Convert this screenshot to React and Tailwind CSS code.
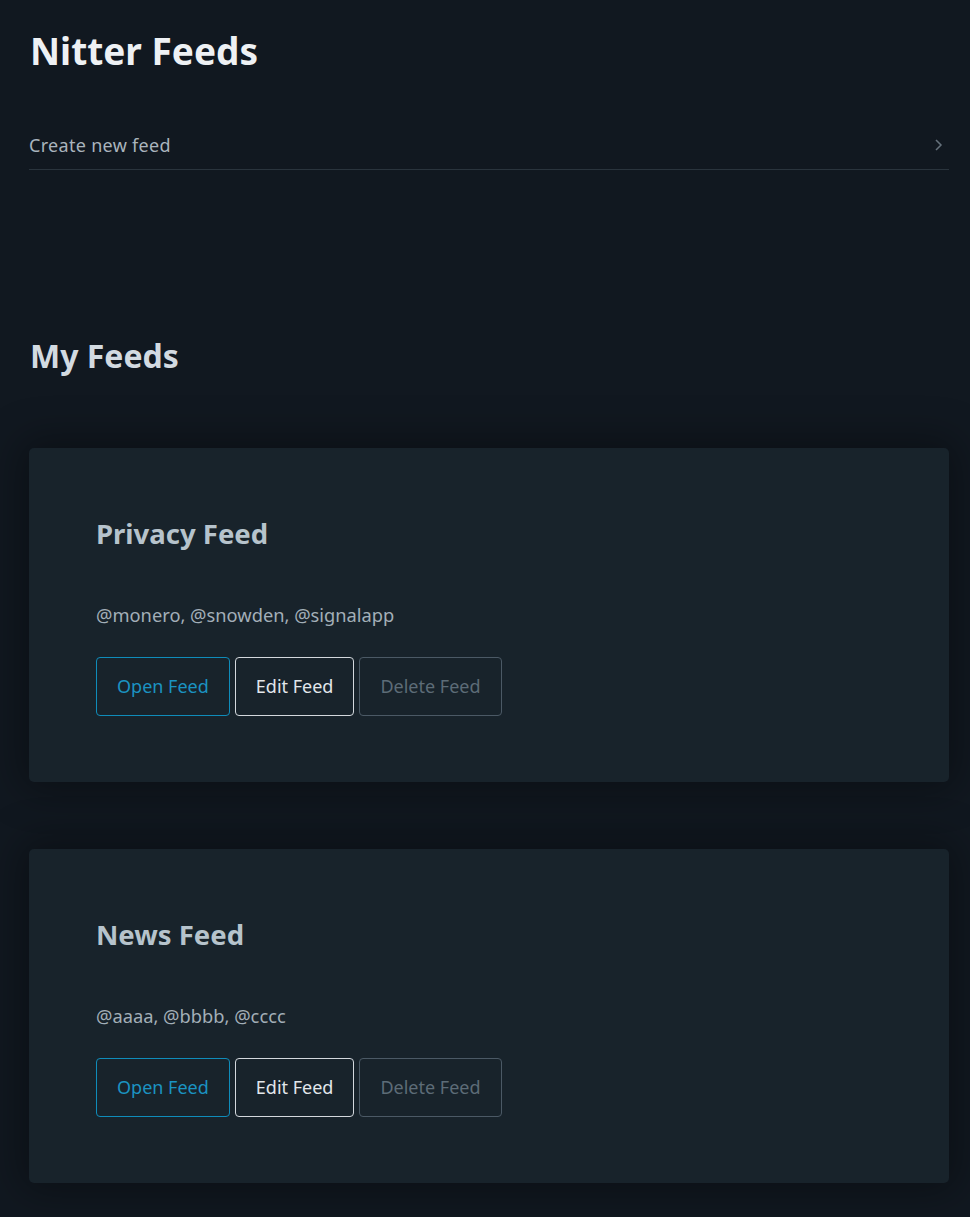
import React from "react";

const FEEDS = [
  { name: "Privacy Feed", handles: ["@monero", "@snowden", "@signalapp"] },
  { name: "News Feed", handles: ["@aaaa", "@bbbb", "@cccc"] },
];

function FeedCard({ feed }) {
  return (
    <section className="rounded-[5px] bg-[#18232b] px-[67px] pt-[64px] pb-[66px] shadow-[0_0_40px_8px_rgba(0,0,0,0.35)]">
      <h3 className="text-[27.5px] leading-[44px] font-bold text-[#b6c3cc]">{feed.name}</h3>
      <p className="mt-[46px] text-[18.3px] leading-[26px] text-[#a3afb8]">{feed.handles.join(", ")}</p>
      <div className="mt-[29px] flex gap-[5px]">
        <button
          type="button"
          className="h-[59px] rounded-[4px] border border-[#0f8cba] px-[20px] text-[18px] text-[#1b93c2]"
        >
          Open Feed
        </button>
        <button
          type="button"
          className="h-[59px] rounded-[4px] border border-[#d3d8dd] px-[20px] text-[18px] text-[#e2e7eb]"
        >
          Edit Feed
        </button>
        <button
          type="button"
          className="h-[59px] rounded-[4px] border border-[#4b5965] px-[20px] text-[18px] text-[#5d6c77]"
        >
          Delete Feed
        </button>
      </div>
    </section>
  );
}

export default function App() {
  return (
    <div className="min-h-[1217px] bg-[#111820] pl-[29px] pr-[21px] pt-[24px] pb-[35px] font-['Noto_Sans',sans-serif]">
      <h1 className="pl-px text-[37px] leading-[54px] font-bold text-[#eef1f4]">Nitter Feeds</h1>

      <a
        href="#"
        className="mt-[45px] flex h-[47px] items-center justify-between border-b border-[#2a343d] pb-[2px] text-[18px] tracking-[0.3px] text-[#aab4bd]"
      >
        <span>Create new feed</span>
        <svg width="10" height="14" viewBox="0 0 10 14" className="mr-[6px] text-[#65717b]">
          <path d="M3 2 L8 7 L3 12" fill="none" stroke="currentColor" strokeWidth="1.5" />
        </svg>
      </a>

      <h2 className="mt-[164px] pl-px text-[32px] leading-[44px] font-bold text-[#d3dae1]">My Feeds</h2>

      <div className="mt-[70px] flex flex-col gap-[67px]">
        {FEEDS.map((feed) => (
          <FeedCard key={feed.name} feed={feed} />
        ))}
      </div>
    </div>
  );
}
